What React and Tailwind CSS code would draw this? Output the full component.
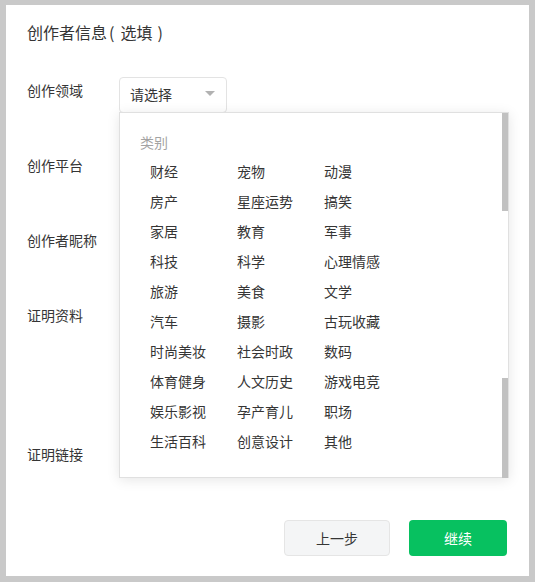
import React from "react";

const items = [
  ["财经", "宠物", "动漫"],
  ["房产", "星座运势", "搞笑"],
  ["家居", "教育", "军事"],
  ["科技", "科学", "心理情感"],
  ["旅游", "美食", "文学"],
  ["汽车", "摄影", "古玩收藏"],
  ["时尚美妆", "社会时政", "数码"],
  ["体育健身", "人文历史", "游戏电竞"],
  ["娱乐影视", "孕产育儿", "职场"],
  ["生活百科", "创意设计", "其他"],
];

const font = { fontFamily: '"Noto Sans CJK SC", "Noto Sans", sans-serif' };

function Label({ children }) {
  return (
    <div className="w-[92px] shrink-0 pt-[3px] text-[14px] leading-[20px] text-[#353535]">
      {children}
    </div>
  );
}

export default function App() {
  return (
    <div
      className="w-[535px] h-[582px] bg-[#c9c9c9] pt-[5px] pl-[6px] pr-[6px] pb-[6px]"
      style={font}
    >
      <div className="w-full h-full bg-white px-[21px] flex flex-col">
        <div className="mt-[15px] text-[16px] leading-[24px] text-[#353535] flex items-center">
          <span>创作者信息</span>
          <span className="ml-[2px]">(</span>
          <span className="ml-[6px]">选填</span>
          <span className="ml-[5px]">)</span>
        </div>
        <div className="mt-[33px] flex flex-col">
          <div className="h-[75px] flex items-start relative z-10">
            <Label>创作领域</Label>
            <div className="relative">
              <div className="w-[108px] h-[36px] border border-[#e3e3e3] rounded-[4px] flex items-center pl-[10px] pr-[10px] pb-[2px] justify-between bg-white">
                <span className="text-[14px] text-[#353535]">请选择</span>
                <svg width="10" height="6" viewBox="0 0 10 6" className="mr-[1px]">
                  <path d="M0 0 L10 0 L5 5 Z" fill="#b2b2b2" />
                </svg>
              </div>
              <div className="absolute left-0 top-[35px] w-[390px] h-[366px] bg-white border border-[#e0e0e0] shadow-[0_2px_12px_rgba(0,0,0,0.10)]">
                <div className="pl-[20px] pt-[19px] text-[14px] leading-[20px] text-[#a3a3a3]">
                  类别
                </div>
                <div className="mt-[4px] pl-[30px] flex flex-col">
                  {items.map((row, i) => (
                    <div key={i} className="flex h-[30px] items-center">
                      {row.map((t) => (
                        <div
                          key={t}
                          className="w-[87px] text-[14px] leading-[20px] text-[#353535]"
                        >
                          {t}
                        </div>
                      ))}
                    </div>
                  ))}
                </div>
                <div className="absolute right-[0px] top-[0px] w-[6px] h-[98px] bg-[#c1c1c1]" />
                <div className="absolute right-[0px] top-[265px] w-[6px] h-[100px] bg-[#c1c1c1]" />
              </div>
            </div>
          </div>
          <div className="h-[75px] flex items-start">
            <Label>创作平台</Label>
          </div>
          <div className="h-[75px] flex items-start">
            <Label>创作者昵称</Label>
          </div>
          <div className="h-[139px] flex items-start">
            <Label>证明资料</Label>
          </div>
          <div className="h-[79px] flex items-start">
            <Label>证明链接</Label>
          </div>
        </div>
        <div className="flex justify-end gap-[19px] pr-[1px]">
          <button className="w-[106px] h-[36px] rounded-[4px] border border-[#e5e5e5] bg-[#f4f5f6] text-[14px] text-[#353535]">
            上一步
          </button>
          <button className="w-[98px] h-[36px] rounded-[4px] bg-[#07c160] text-[14px] text-white">
            继续
          </button>
        </div>
      </div>
    </div>
  );
}
